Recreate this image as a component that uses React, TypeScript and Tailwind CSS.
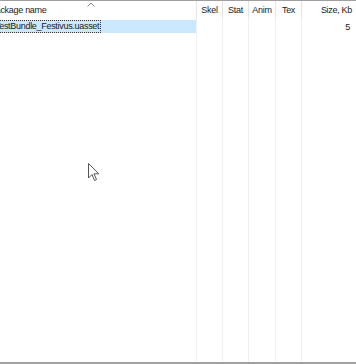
import React from 'react';

const cols = [
  { label: 'Skel', w: 'w-[26px]' },
  { label: 'Stat', w: 'w-[26px]' },
  { label: 'Anim', w: 'w-[27px]' },
  { label: 'Tex', w: 'w-[26px]' },
];

const App: React.FC = () => {
  return (
    <div
      className="relative w-[356px] h-[364px] bg-white overflow-hidden flex flex-col text-[9px] tracking-[-0.3px] text-[#1a1a1a]"
      style={{ fontFamily: '"Liberation Sans", Arial, sans-serif' }}
    >
      {/* header */}
      <div className="flex h-[18px] border-t border-[#a0a0a0] shrink-0">
        <div className="relative w-[197px] border-r border-[#e5e5e5] overflow-hidden">
          <svg className="absolute left-[87px] top-[1px]" width="8" height="5" viewBox="0 0 8 5">
            <path d="M0.5 4.5 L4 1 L7.5 4.5" fill="none" stroke="#888" strokeWidth="1" />
          </svg>
          <div className="whitespace-nowrap -ml-[10px] pt-[3px]">Package name</div>
        </div>
        {cols.map((c) => (
          <div key={c.label} className={`${c.w} border-r border-[#e5e5e5] text-center pt-[3px]`}>
            {c.label}
          </div>
        ))}
        <div className="flex-1 text-right pr-[4px] pt-[3px]">Size, Kb</div>
      </div>

      {/* body */}
      <div className="flex flex-1 border-b-2 border-[#a0a0a0]">
        <div className="w-[197px] border-r border-[#f0f0f0] overflow-hidden">
          <div className="h-[13px] mt-[2px] bg-[#cce8ff] flex items-center">
            <div className="-ml-[7px] border border-dotted border-[#333] leading-[11px] whitespace-nowrap px-px">
              TestBundle_Festivus.uasset
            </div>
          </div>
        </div>
        {cols.map((c) => (
          <div key={c.label} className={`${c.w} border-r border-[#f0f0f0]`} />
        ))}
        <div className="flex-1 text-right pr-[6px] pt-[3px] leading-[13px]">5</div>
      </div>

      {/* mouse pointer */}
      <svg className="absolute left-[88px] top-[163px]" width="12" height="19" viewBox="0 0 12 19">
        <path
          d="M0.5 0.5 L0.5 15 L4 11.5 L6.5 17.5 L8.5 16.5 L6 10.8 L10.8 10.8 Z"
          fill="white"
          stroke="#555"
          strokeWidth="1"
          strokeLinejoin="round"
        />
      </svg>
    </div>
  );
};

export default App;
